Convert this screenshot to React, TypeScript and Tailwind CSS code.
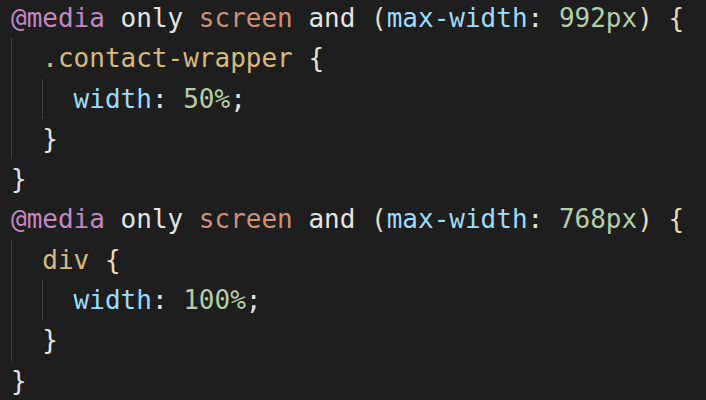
type Tok = [string, string];

const W = "text-[#e4e4e4]";
const P = "text-[#ead9b4]";
const KW = "text-[#c586c0]";
const STR = "text-[#ce9178]";
const PROP = "text-[#9cdcfe]";
const NUM = "text-[#b5cea8]";
const SEL = "text-[#d7ba7d]";

const media = (px: string): Tok[] => [
  ["@media", KW],
  [" only ", W],
  ["screen", STR],
  [" and ", W],
  ["(", P],
  ["max-width", PROP],
  [": ", W],
  [px, NUM],
  [")", P],
  [" ", W],
  ["{", P],
];

const lines: { indent: number; toks: Tok[] }[] = [
  { indent: 0, toks: media("992px") },
  { indent: 1, toks: [[".contact-wrapper", SEL], [" ", W], ["{", "text-[#e8e4da]"]] },
  { indent: 2, toks: [["width", PROP], [": ", W], ["50%", NUM], [";", W]] },
  { indent: 1, toks: [["}", "text-[#e8e4da]"]] },
  { indent: 0, toks: [["}", "text-[#d8e6f5]"]] },
  { indent: 0, toks: media("768px") },
  { indent: 1, toks: [["div", SEL], [" ", W], ["{", P]] },
  { indent: 2, toks: [["width", PROP], [": ", W], ["100%", NUM], [";", W]] },
  { indent: 1, toks: [["}", "text-[#e8e4da]"]] },
  { indent: 0, toks: [["}", "text-[#d8e6f5]"]] },
];

export default function App() {
  return (
    <div className="w-[706px] h-[400px] overflow-hidden bg-[#1e1e1e]">
      <div
        className="mt-[-2px] pl-[11px] text-[26px] leading-[40.3px] whitespace-pre"
        style={{ fontFamily: '"DejaVu Sans Mono", "Liberation Mono", monospace' }}
      >
        {lines.map((line, i) => (
          <div key={i} className="flex h-[40.3px]">
            {Array.from({ length: line.indent }).map((_, j) => (
              <span key={j} className="w-[31.3px] shrink-0 border-l border-[#404040]" />
            ))}
            <span>
              {line.toks.map(([t, c], k) => (
                <span key={k} className={c}>
                  {t}
                </span>
              ))}
            </span>
          </div>
        ))}
      </div>
    </div>
  );
}
